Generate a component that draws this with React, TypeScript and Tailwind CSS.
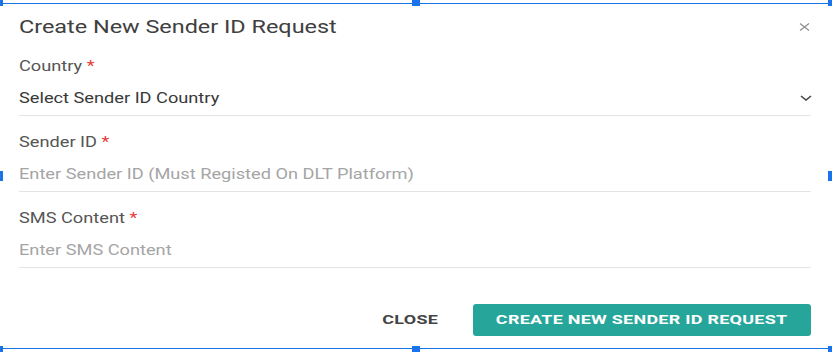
/** Text that is drawn wider than the font, as in the reference. */
function Wide({ children, className = "" }: { children: React.ReactNode; className?: string }) {
  return <span className={`inline-block origin-left scale-x-[1.3] whitespace-nowrap ${className}`}>{children}</span>;
}

/** One labelled form row with an underlined input. */
function Field({
  label,
  placeholder,
  value,
  select,
}: {
  label: string;
  placeholder?: string;
  value?: string;
  select?: boolean;
}) {
  return (
    <div className="flex flex-col gap-[5px]">
      <div className="h-5 text-[14px] leading-5 text-[#555]">
        <Wide>
          {label} <span className="text-[#e53935]">*</span>
        </Wide>
      </div>
      <div className="flex h-[35px] items-center justify-between border-b border-[#e3e3e3]">
        {value ? (
          <Wide className="text-[14px] text-[#383838]">{value}</Wide>
        ) : (
          <Wide className="text-[14px] text-[#a5a5a5]">{placeholder}</Wide>
        )}
        {select && (
          <svg width="12" height="6" viewBox="0 0 12 6" className="mr-[-1px]">
            <polyline points="1,1 6,5 11,1" fill="none" stroke="#444" strokeWidth="1.6" />
          </svg>
        )}
      </div>
    </div>
  );
}

/** Design-tool selection frame drawn over the dialog. */
function SelectionFrame() {
  const handleRow = (h: string) => (
    <div className={`flex items-start justify-between ${h}`}>
      <div className="h-full w-[3px] bg-[#1a73e8]" />
      {h === "h-[10px]" ? null : <div className="h-full w-[8px] bg-[#1a73e8]" />}
      <div className="h-full w-[4px] bg-[#1a73e8]" />
    </div>
  );
  return (
    <div className="pointer-events-none absolute inset-0">
      <div className="absolute inset-[3px] border-y border-[#1a73e8]" />
      <div className="relative flex h-full flex-col justify-between">
        {handleRow("h-[6px]")}
        {handleRow("h-[10px]")}
        {handleRow("h-[6px]")}
      </div>
    </div>
  );
}

export default function App() {
  return (
    <div className="relative h-[352px] w-[832px] overflow-hidden bg-white font-['Roboto',sans-serif]">
      <div className="flex flex-col pl-[19px] pr-[21px] pt-[15px]">
        <div className="flex h-6 items-center justify-between">
          <h2 className="text-[18px] leading-6 text-[#404040]">
            <Wide>Create New Sender ID Request</Wide>
          </h2>
          <svg width="11" height="8" viewBox="0 0 11 8" className="mr-[1px]">
            <path d="M1 0.5 L10 7.5 M10 0.5 L1 7.5" stroke="#8a8a8a" strokeWidth="1.1" fill="none" />
          </svg>
        </div>

        <div className="mt-[17px] flex flex-col gap-[16px]">
          <Field label="Country" value="Select Sender ID Country" select />
          <Field label="Sender ID" placeholder="Enter Sender ID (Must Registed On DLT Platform)" />
          <Field label="SMS Content" placeholder="Enter SMS Content" />
        </div>

        <div className="mt-[36px] flex items-center justify-end gap-[43px]">
          <button className="text-[13px] font-bold tracking-[0.2px] text-[#444]">
            <span className="inline-block scale-x-[1.38]">CLOSE</span>
          </button>
          <button className="h-8 w-[338px] rounded-[3px] bg-[#26a69a] text-[13px] font-bold tracking-[0.2px] text-white">
            <span className="inline-block scale-x-[1.38]">CREATE NEW SENDER ID REQUEST</span>
          </button>
        </div>
      </div>

      <SelectionFrame />
    </div>
  );
}
